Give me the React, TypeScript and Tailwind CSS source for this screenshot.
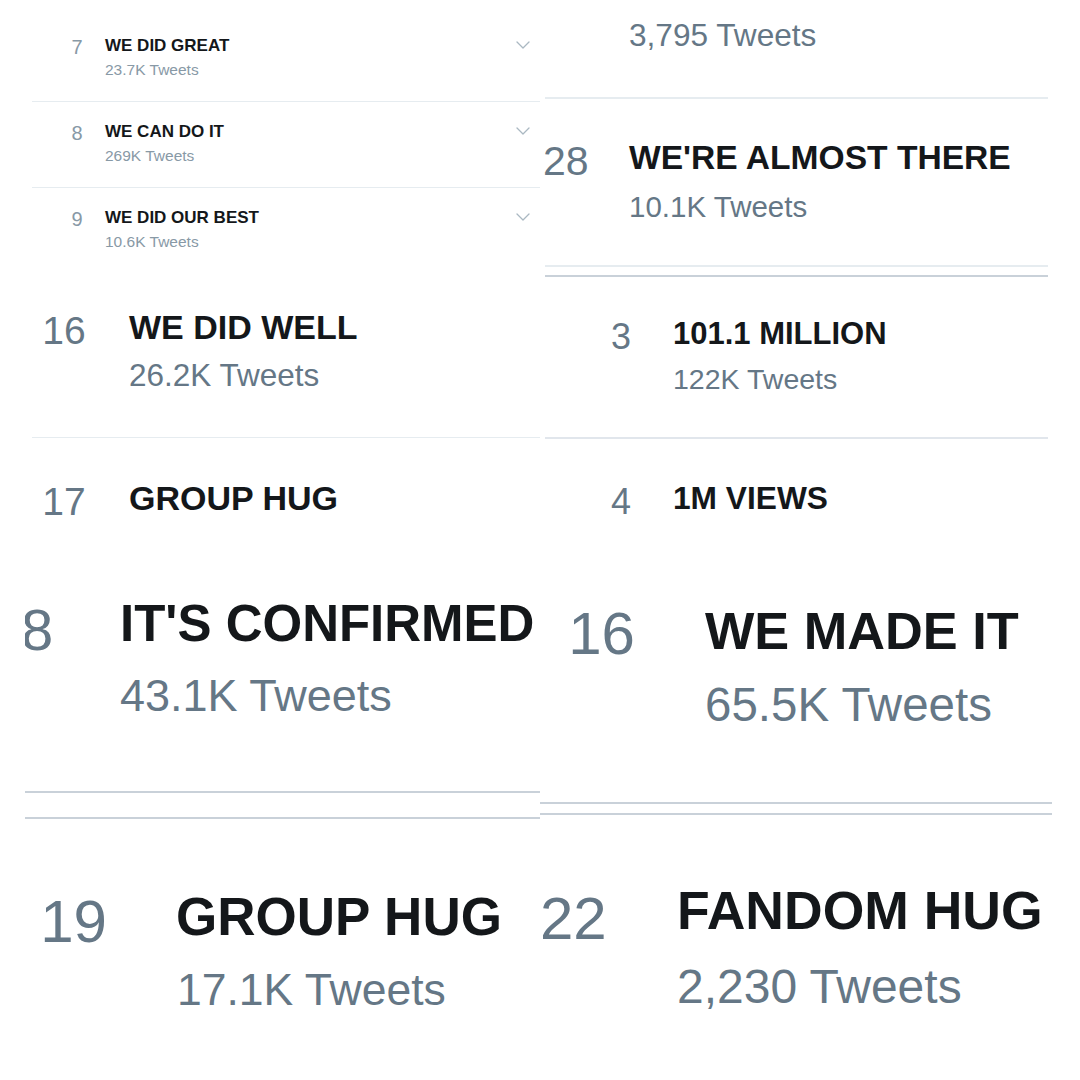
import React from "react";

function Chevron() {
  return (
    <svg width="14" height="8" viewBox="0 0 14 8" fill="none">
      <path d="M1 1 L7 7 L13 1" stroke="#aab8c2" strokeWidth="1.3" strokeLinecap="round" strokeLinejoin="round" />
    </svg>
  );
}

export default function App() {
  return (
    <div className="w-[1080px] h-[1080px] bg-white overflow-hidden grid grid-cols-2 font-['Liberation_Sans',Arial,sans-serif]">
      {/* LEFT COLUMN */}
      <div className="flex flex-col">
        {/* Panel A */}
        <div className="h-[280px] pt-[16px]">
          <div className="ml-[32px] flex h-[86px] border-b border-[#e6ecf0]">
            <div className="ml-[28px] mt-[21px] w-[34px] text-center text-[20px] leading-none text-[#8899a6]">7</div>
            <div className="ml-[11px] mt-[21px]">
              <div className="text-[17px] font-bold leading-none text-[#14171a]">WE DID GREAT</div>
              <div className="mt-[8px] text-[15.5px] leading-none text-[#8899a6]">23.7K Tweets</div>
            </div>
            <div className="ml-auto mr-[10px] mt-[25px]"><Chevron /></div>
          </div>
          <div className="ml-[32px] flex h-[86px] border-b border-[#e6ecf0]">
            <div className="ml-[28px] mt-[21px] w-[34px] text-center text-[20px] leading-none text-[#8899a6]">8</div>
            <div className="ml-[11px] mt-[21px]">
              <div className="text-[17px] font-bold leading-none text-[#14171a]">WE CAN DO IT</div>
              <div className="mt-[8px] text-[15.5px] leading-none text-[#8899a6]">269K Tweets</div>
            </div>
            <div className="ml-auto mr-[10px] mt-[25px]"><Chevron /></div>
          </div>
          <div className="ml-[32px] flex h-[86px]">
            <div className="ml-[28px] mt-[21px] w-[34px] text-center text-[20px] leading-none text-[#8899a6]">9</div>
            <div className="ml-[11px] mt-[21px]">
              <div className="text-[17px] font-bold leading-none text-[#14171a]">WE DID OUR BEST</div>
              <div className="mt-[8px] text-[15.5px] leading-none text-[#8899a6]">10.6K Tweets</div>
            </div>
            <div className="ml-auto mr-[10px] mt-[25px]"><Chevron /></div>
          </div>
        </div>

        {/* Panel B */}
        <div className="h-[280px]">
          <div className="ml-[32px] flex h-[158px] border-b border-[#e6ecf0]">
            <div className="ml-[10px] mt-[31px] w-[44px] text-center text-[39px] leading-none text-[#657786]">16</div>
            <div className="ml-[43px] mt-[30px]">
              <div className="text-[34px] font-bold leading-none text-[#14171a]">WE DID WELL</div>
              <div className="mt-[16px] text-[31.5px] leading-none text-[#657786]">26.2K Tweets</div>
            </div>
          </div>
          <div className="ml-[32px] flex">
            <div className="ml-[10px] mt-[44px] w-[44px] text-center text-[39px] leading-none text-[#657786]">17</div>
            <div className="ml-[43px] mt-[43px]">
              <div className="text-[34px] font-bold leading-none text-[#14171a]">GROUP HUG</div>
            </div>
          </div>
        </div>

        {/* Panel C */}
        <div className="h-[280px] ml-[25px] overflow-hidden">
          <div className="flex h-[231px]">
            <div className="-ml-[4px] mt-[41px] w-[33px] text-[58px] leading-none text-[#657786]">8</div>
            <div className="ml-[66px] mt-[38px] whitespace-nowrap">
              <div className="text-[51px] font-bold leading-none text-[#14171a]">IT'S CONFIRMED</div>
              <div className="mt-[24px] text-[45px] leading-none text-[#657786]">43.1K Tweets</div>
            </div>
          </div>
          <div className="h-[2px] bg-[#c9d1d9]" />
          <div className="mt-[24px] h-[2px] bg-[#c9d1d9]" />
        </div>

        {/* Panel D */}
        <div className="h-[240px] flex">
          <div className="ml-[40px] mt-[52px] w-[67px] text-center text-[60px] leading-none text-[#657786]">19</div>
          <div className="ml-[69px] mt-[50px] whitespace-nowrap">
            <div className="text-[53px] font-bold leading-none text-[#14171a]">GROUP HUG</div>
            <div className="ml-[1px] mt-[25px] text-[44.5px] leading-none text-[#657786]">17.1K Tweets</div>
          </div>
        </div>
      </div>

      {/* RIGHT COLUMN */}
      <div className="flex flex-col">
        {/* Panel E */}
        <div className="h-[280px]">
          <div className="h-[97px] pt-[20px] pl-[89px]">
            <div className="text-[31.6px] leading-none text-[#657786]">3,795 Tweets</div>
          </div>
          <div className="ml-[5px] mr-[32px] h-[2px] bg-[#e6ecf0]" />
          <div className="flex h-[166px]">
            <div className="ml-[3px] mt-[42px] w-[46px] text-[41px] leading-none text-[#657786]">28</div>
            <div className="ml-[40px] mt-[42px] whitespace-nowrap">
              <div className="text-[33.6px] font-bold leading-none text-[#14171a]">WE'RE ALMOST THERE</div>
              <div className="mt-[17px] text-[29.5px] leading-none text-[#657786]">10.1K Tweets</div>
            </div>
          </div>
          <div className="ml-[5px] mr-[32px] h-[2px] bg-[#e6ecf0]" />
          <div className="ml-[5px] mr-[32px] mt-[8px] h-[2px] bg-[#c9d1d9]" />
        </div>

        {/* Panel F */}
        <div className="h-[280px]">
          <div className="ml-[5px] mr-[32px] flex h-[159px] border-b-2 border-[#e1e6ec]">
            <div className="ml-[66px] mt-[39px] w-[24px] text-[36px] leading-none text-[#657786]">3</div>
            <div className="ml-[38px] mt-[38px] whitespace-nowrap">
              <div className="text-[31px] font-bold leading-none text-[#14171a]">101.1 MILLION</div>
              <div className="mt-[16px] text-[28.5px] leading-none text-[#657786]">122K Tweets</div>
            </div>
          </div>
          <div className="ml-[5px] flex">
            <div className="ml-[66px] mt-[45px] w-[24px] text-[36px] leading-none text-[#657786]">4</div>
            <div className="ml-[38px] mt-[44px] whitespace-nowrap">
              <div className="text-[31.7px] font-bold leading-none text-[#14171a]">1M VIEWS</div>
            </div>
          </div>
        </div>

        {/* Panel G */}
        <div className="h-[255px]">
          <div className="flex h-[242px]">
            <div className="ml-[28px] mt-[44px] w-[67px] text-center text-[60px] leading-none text-[#657786]">16</div>
            <div className="ml-[70px] mt-[45px] whitespace-nowrap">
              <div className="text-[52.3px] font-bold leading-none text-[#14171a]">WE MADE IT</div>
              <div className="mt-[24px] text-[47.5px] leading-none text-[#657786]">65.5K Tweets</div>
            </div>
          </div>
          <div className="mr-[28px] h-[2px] bg-[#c9d1d9]" />
          <div className="mr-[28px] mt-[9px] h-[2px] bg-[#c9d1d9]" />
        </div>

        {/* Panel H */}
        <div className="flex flex-1">
          <div className="mt-[74px] w-[67px] text-[60px] leading-none text-[#657786]">22</div>
          <div className="ml-[70px] mt-[69px] whitespace-nowrap">
            <div className="text-[53.5px] font-bold leading-none text-[#14171a]">FANDOM HUG</div>
            <div className="mt-[25px] text-[48px] leading-none text-[#657786]">2,230 Tweets</div>
          </div>
        </div>
      </div>
    </div>
  );
}
